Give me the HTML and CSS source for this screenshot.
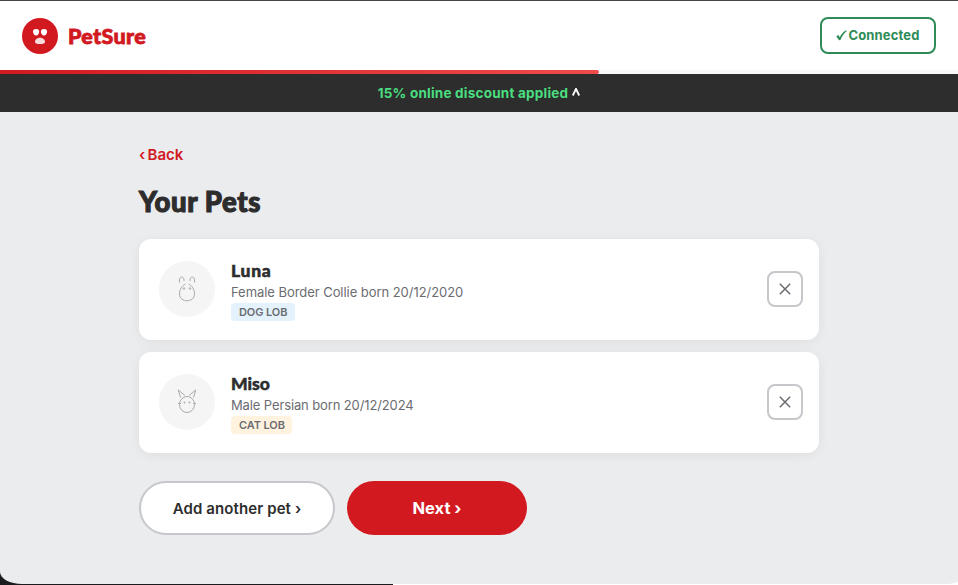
FILE: index.html
```html
<!DOCTYPE html>
<html lang="en">
<head>
    <meta charset="UTF-8">
    <title>PetSure - Your Pets</title>
    <link rel="stylesheet" href="styles.css">
</head>
<body>
    <div class="window">
        <header class="header">
            <div class="brand">
                <svg class="logo" width="36" height="36" viewBox="0 0 36 36">
                    <circle cx="18" cy="18" r="18" fill="#d2191f"/>
                    <path d="M11 13.500c0-1.900 1.200-2.600 3.100-2.600s3.100.7 3.100 2.600c0 2.200-1.300 4-3.100 4S11 15.700 11 13.500zM18.900 13.500c0-1.900 1.200-2.600 3.100-2.600s3.100.7 3.100 2.600c0 2.200-1.300 4-3.100 4s-3.100-1.800-3.100-4z" fill="#fff"/>
                    <path d="M13 24c0-2.600 2.200-4.300 5-4.300s5 1.700 5 4.300c0 1.600-2 2-5 2s-5-.4-5-2z" fill="#fff" opacity=".85"/>
                </svg>
                <span class="brand-name">PetSure</span>
            </div>
            <div class="status">
                <svg width="11" height="11" viewBox="0 0 11 11">
                    <path d="M.3 6.300 2.400 5.100 3.800 7.200C5.300 4.200 7.200 1.900 10.200.3L10.700 1C7.900 3.400 6.100 6.200 4.500 10L3 10.200z" fill="#2e8b57"/>
                </svg>
                <span>Connected</span>
            </div>
        </header>
        <div class="progress"><div class="progress-bar"></div></div>
        <div class="discount"><span class="discount-text">15% online discount applied</span><svg width="8" height="10" viewBox="0 0 8 10"><path d="M.8 7.500 4 .8 7.200 7.500" fill="none" stroke="#fff" stroke-width="1.800"/></svg></div>

        <main class="main">
            <a class="back" href="#">‹ Back</a>
            <h1>Your Pets</h1>

            <div class="pet">
                <div class="avatar">
                    <svg width="28" height="28" viewBox="0 0 28 28">
                        <path d="M6.500 7.500V5c0-4 4.500-4 4.500 0v1M17 6V5c0-4 4.500-4 4.500 0v2.500M12.500 9C9 10.500 6.500 14.500 6.500 19c0 9 15 9 15 0 0-4.500-2.500-8.500-6-10"/>
                        <circle cx="11" cy="13.500" r=".8"/>
                        <circle cx="17" cy="13.500" r=".8"/>
                    </svg>
                </div>
                <div class="info">
                    <h2 class="luna">Luna</h2>
                    <p class="luna-desc">Female Border Collie born 20/12/2020</p>
                    <span class="tag dog">DOG LOB</span>
                </div>
                <button class="remove"><svg width="12" height="12" viewBox="0 0 12 12"><path d="M.8.8l10.400 10.400M11.200.8.8 11.200"/></svg></button>
            </div>

            <div class="pet">
                <div class="avatar">
                    <svg width="28" height="28" viewBox="0 0 28 28">
                        <path d="M7.500 9.500 5.300 2 12 7.500M20.500 9.500 22.700 2 16 7.500"/>
                        <ellipse cx="14" cy="16.500" rx="7.500" ry="8"/>
                        <path d="M5 15.500h3M20 15.500h3"/>
                        <circle cx="11.500" cy="14.500" r=".6"/>
                        <circle cx="16.500" cy="14.500" r=".6"/>
                    </svg>
                </div>
                <div class="info">
                    <h2 class="miso">Miso</h2>
                    <p class="miso-desc">Male Persian born 20/12/2024</p>
                    <span class="tag cat">CAT LOB</span>
                </div>
                <button class="remove"><svg width="12" height="12" viewBox="0 0 12 12"><path d="M.8.8l10.400 10.400M11.200.8.8 11.200"/></svg></button>
            </div>

            <div class="actions">
                <button class="btn add">Add another pet ›</button>
                <button class="btn next">Next ›</button>
            </div>
        </main>
    </div>
</body>
</html>
```

FILE: styles.css
```css
* {
    margin: 0;
    padding: 0;
    box-sizing: border-box;
}

body {
    height: 585px;
    overflow: hidden;
    background: linear-gradient(90deg, #1a1b1c 393px, #fff 393px);
    font-family: Inter, "Liberation Sans", sans-serif;
    color: #2d2d2d;
}

.window {
    height: 584px;
    border-top: 1px solid #454446;
    border-radius: 0 0 12px 22px / 0 0 3px 12px;
    background: #ebecee;
    overflow: hidden;
}

.header {
    display: flex;
    align-items: center;
    justify-content: space-between;
    height: 69px;
    padding: 0 22px;
    background: #fff;
}

.brand {
    display: flex;
    align-items: center;
    gap: 10px;
}

.brand-name {
    font-family: Lato, sans-serif;
    font-size: 21.5px;
    font-weight: 900;
    letter-spacing: 0.35px;
    -webkit-text-stroke: 0.8px #d2191f;
    color: #d2191f;
}

.status {
    display: flex;
    align-items: center;
    justify-content: center;
    gap: 1px;
    width: 116px;
    height: 37px;
    border: 2px solid #2e8b57;
    border-radius: 8px;
    font-size: 13px;
    font-weight: 700;
    letter-spacing: 0.15px;
    color: #2e8b57;
}

.status span {
    margin-top: -1px;
}

.progress {
    height: 4px;
    background: #f8f8f8;
}

.progress-bar {
    width: 599px;
    height: 4px;
    border-radius: 0 2px 2px 0;
    background: linear-gradient(90deg, #d2191f, #ef4b4b);
}

.discount {
    display: flex;
    align-items: center;
    justify-content: center;
    gap: 4px;
    height: 38px;
    background: #2d2d2d;
    font-size: 13.5px;
    font-weight: 700;
    letter-spacing: 0.22px;
    color: #4ade80;
}

.main {
    width: 680px;
    margin: 0 auto;
    padding-top: 32px;
}

.back {
    display: block;
    height: 22px;
    line-height: 22px;
    font-size: 15px;
    font-weight: 600;
    word-spacing: -1.5px;
    color: #d2191f;
    text-decoration: none;
}

h1 {
    height: 36px;
    margin: 18px 0 19px;
    line-height: 35px;
    font-family: Lato, sans-serif;
    font-size: 27.5px;
    font-weight: 900;
    letter-spacing: 0.6px;
    -webkit-text-stroke: 1.1px #2d2d2d;
}

.pet {
    display: flex;
    align-items: center;
    height: 101px;
    margin-bottom: 12px;
    padding: 0 16px 1px 20px;
    border-radius: 12px;
    background: #fff;
    box-shadow: 0 2px 12px rgba(0, 0, 0, .06);
}

.avatar {
    display: flex;
    align-items: center;
    justify-content: center;
    width: 56px;
    height: 56px;
    border-radius: 50%;
    background: #f5f5f5;
}

.avatar svg {
    fill: none;
    stroke: #aaaaac;
    stroke-width: 1;
}

.info {
    flex: 1;
    align-self: flex-start;
    margin: 20px 0 0 16px;
}

h2 {
    height: 23px;
    line-height: 23px;
    font-family: Lato, sans-serif;
    font-size: 17.5px;
    font-weight: 900;
    -webkit-text-stroke: 0.5px #2d2d2d;
}

.luna {
    letter-spacing: 0.7px;
}

.info p {
    height: 21px;
    line-height: 21px;
    font-size: 13px;
    color: #6b6c71;
}

.luna-desc {
    letter-spacing: -0.05px;
}

.miso-desc {
    letter-spacing: -0.12px;
}

.tag {
    display: block;
    width: 64px;
    height: 18px;
    border-radius: 4px;
    padding-left: 8px;
    line-height: 18px;
    font-size: 11px;
    font-weight: 600;
    letter-spacing: -0.1px;
    color: #6b6c71;
    white-space: nowrap;
}

.dog {
    background: #e3f2fd;
}

.cat {
    width: 61px;
    background: #fff3e0;
}

.remove {
    display: flex;
    align-items: center;
    justify-content: center;
    width: 36px;
    height: 36px;
    padding-bottom: 1px;
    border: 2px solid #c6c7cb;
    border-radius: 8px;
    background: #fff;
}

.remove svg {
    fill: none;
    stroke: #6b6c71;
    stroke-width: 1.5;
}

.actions {
    display: flex;
    gap: 12px;
    padding-top: 16px;
}

.btn {
    height: 54px;
    border-radius: 27px;
    font-family: Inter, sans-serif;
    font-weight: 600;
    white-space: nowrap;
}

.add {
    width: 196px;
    border: 2px solid #c6c7cb;
    background: #fff;
    font-size: 15px;
    letter-spacing: 0.1px;
    color: #2d2d2d;
}

.next {
    width: 180px;
    border: 0;
    background: #d2191f;
    font-size: 16.5px;
    font-weight: 700;
    color: #fff;
}
```
